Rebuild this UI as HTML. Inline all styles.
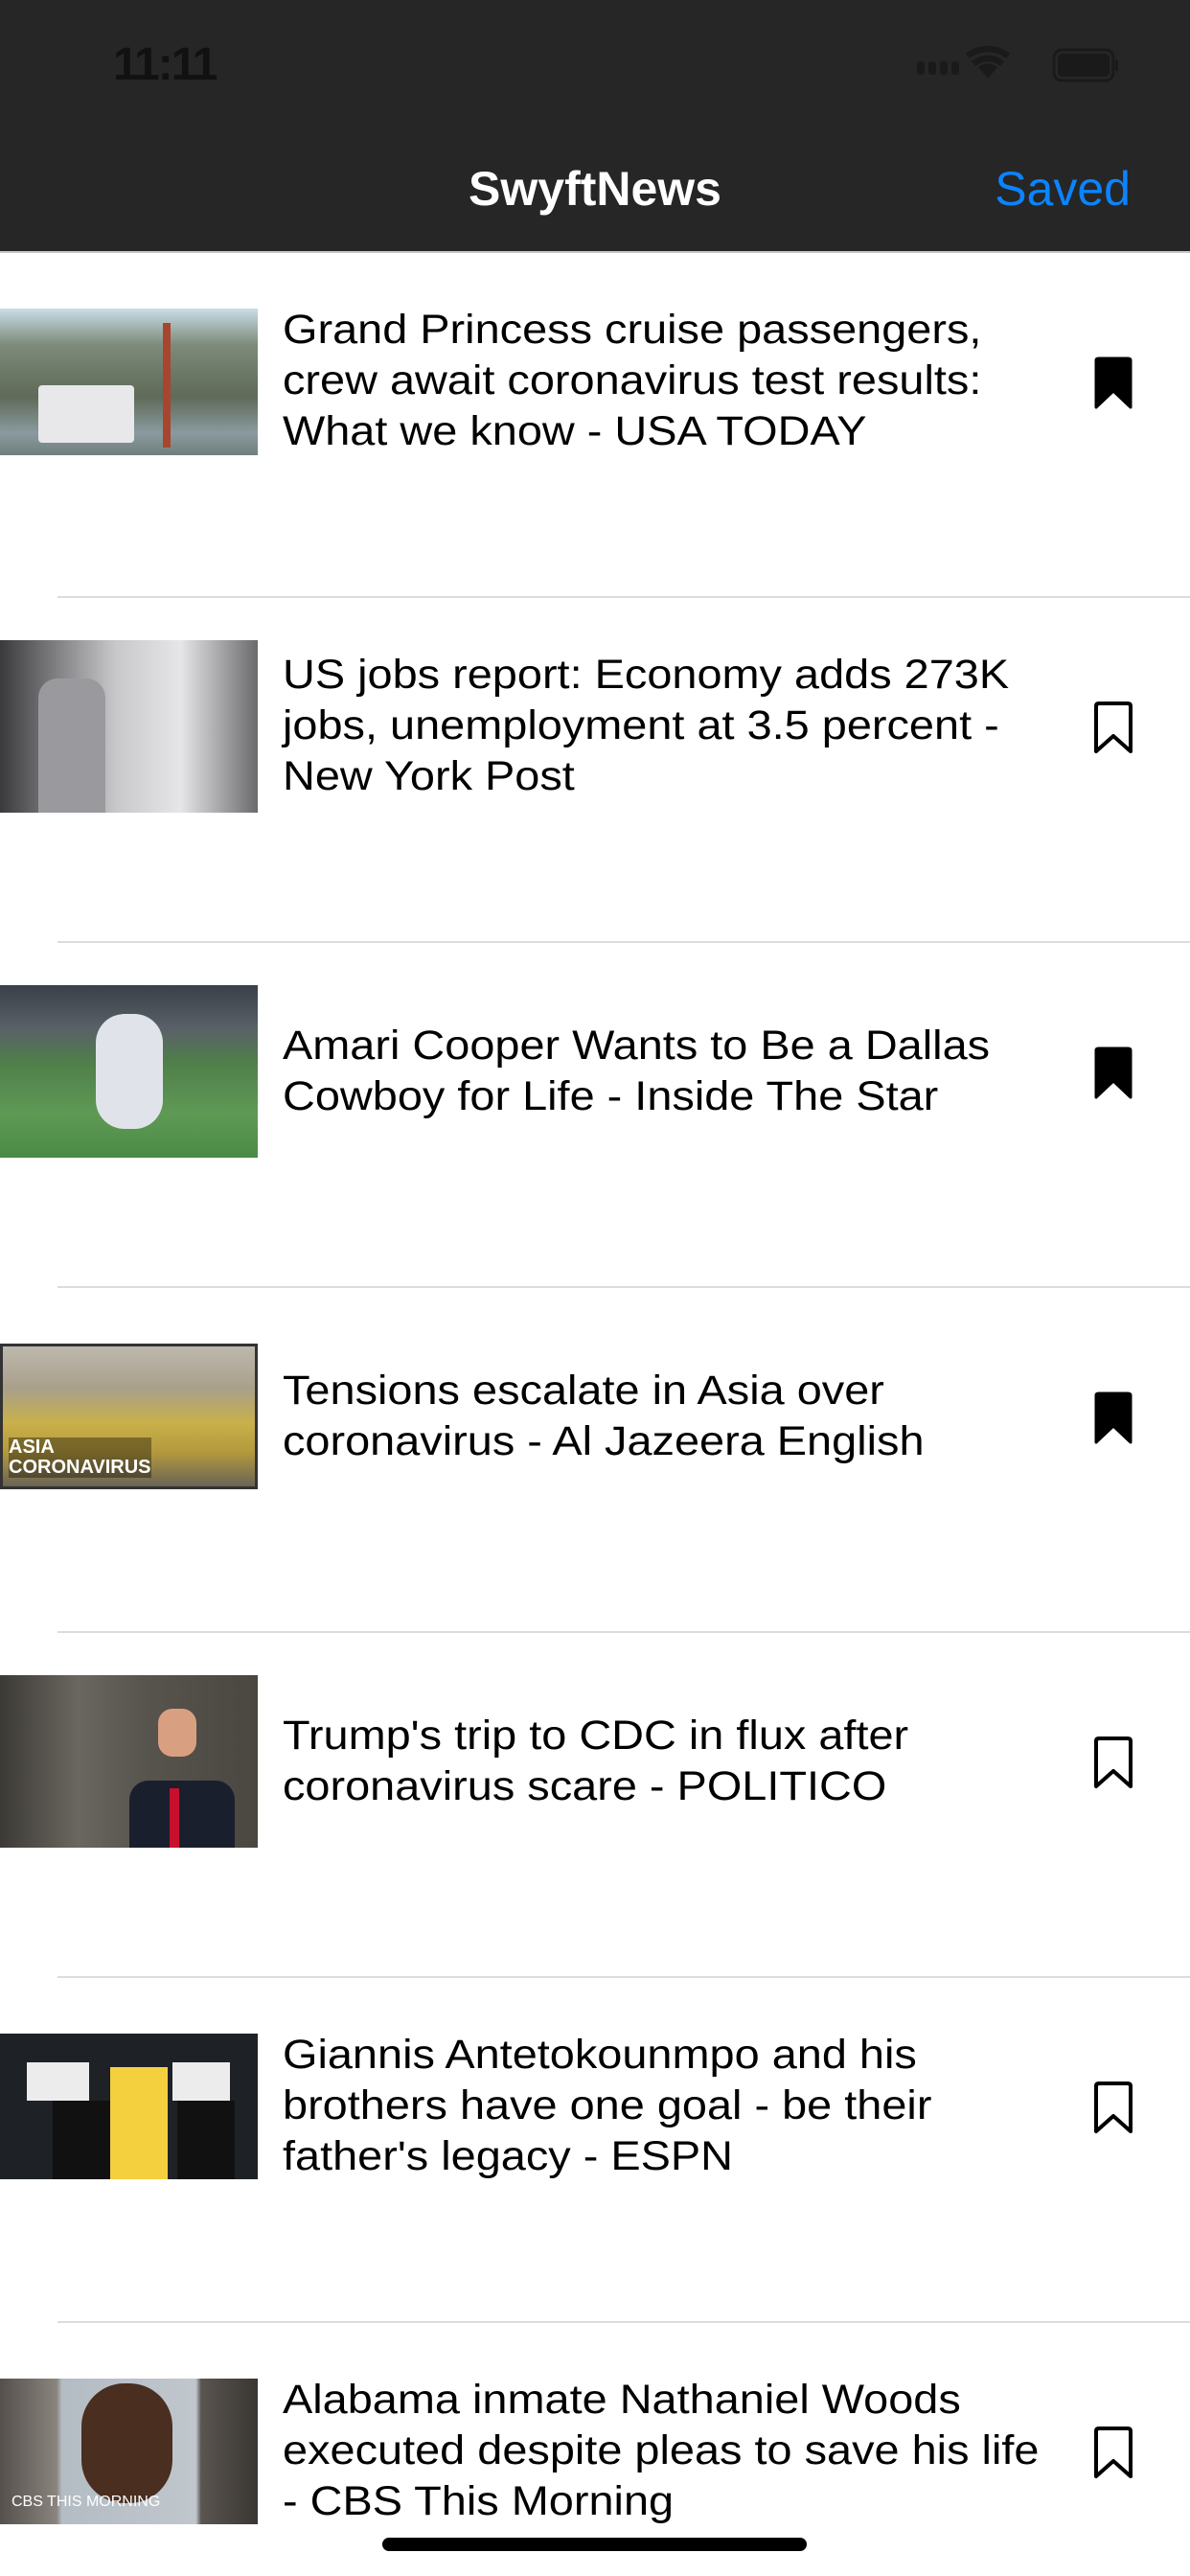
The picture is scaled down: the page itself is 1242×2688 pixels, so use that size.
<!DOCTYPE html>
<html><head><meta charset="utf-8"><style>
*{margin:0;padding:0;box-sizing:border-box}
body{width:1242px;height:2688px;background:#fff;position:relative;overflow:hidden;font-family:"Liberation Sans",sans-serif}
.hdr{position:absolute;left:0;top:0;width:1242px;height:264px;background:#262626;border-bottom:2px solid #c8c8c8}
.time{position:absolute;left:118px;top:40px;font-size:48px;font-weight:bold;color:#111;letter-spacing:-2px}
.title{position:absolute;left:0;width:1242px;top:168px;text-align:center;font-size:50px;font-weight:bold;color:#fff}
.saved{position:absolute;right:62px;top:168px;font-size:50px;color:#0a84ff}
.thumb{position:absolute;left:0;width:269px}
.txt{position:absolute;left:295px;font-size:43px;line-height:53px;color:#000;white-space:nowrap;transform:scaleX(1.09);transform-origin:0 0}
.sep{position:absolute;left:60px;right:0;height:2px;background:#dcdcdc}
.bm{position:absolute;left:1140px;width:44px;height:56px}
.home{position:absolute;left:399px;top:2648px;width:443px;height:14px;border-radius:7px;background:#000}
</style></head><body>
<div class="hdr">
<div class="time">11:11</div>
<svg style="position:absolute;left:955px;top:44px" width="230" height="50" viewBox="0 0 230 50">
<g fill="#1a1a1a"><rect x="2" y="20" width="8" height="14" rx="3"/><rect x="14" y="20" width="8" height="14" rx="3"/><rect x="26" y="20" width="8" height="14" rx="3"/><rect x="38" y="20" width="8" height="14" rx="3"/>
<path d="M76 38 L66 26 A16 16 0 0 1 86 26 Z"/>
<path d="M59 20 A26 26 0 0 1 93 20 L89 25 A20 20 0 0 0 63 25 Z"/>
<path d="M53 12 A36 36 0 0 1 99 12 L95 17 A30 30 0 0 0 57 17 Z"/>
<rect x="145" y="8" width="62" height="32" rx="8" fill="none" stroke="#1a1a1a" stroke-width="3"/>
<rect x="149" y="12" width="54" height="24" rx="5"/><rect x="209" y="18" width="3" height="12" rx="1"/></g></svg>
<div class="title">SwyftNews</div>
<div class="saved">Saved</div>
</div>

<!-- row 1 -->
<div class="thumb" style="top:322px;height:153px;background:linear-gradient(180deg,#c9dde6 0%,#7d8a7a 25%,#5f6a58 60%,#8a9aa0 85%,#6f7f7a 100%)"><div style="position:absolute;left:40px;top:80px;width:100px;height:60px;background:#e8e8ea;border-radius:4px"></div><div style="position:absolute;left:170px;top:15px;width:8px;height:130px;background:#a8452f"></div></div>
<div class="txt" style="top:318px">Grand Princess cruise passengers,<br>crew await coronavirus test results:<br>What we know - USA TODAY</div>
<svg class="bm" style="top:372px" viewBox="0 0 44 56"><path d="M4 4 Q4 2 7 2 H37 Q40 2 40 4 V53 L22 36 L4 53 Z" fill="#000" stroke="#000" stroke-width="3" stroke-linejoin="round"/></svg>
<div class="sep" style="top:622px"></div>

<!-- row 2 -->
<div class="thumb" style="top:668px;height:180px;background:linear-gradient(90deg,#3a3a3c 0%,#8a8a8c 25%,#c8c8ca 45%,#e6e6e8 70%,#6a6a6c 100%)"><div style="position:absolute;left:40px;top:40px;width:70px;height:140px;background:#9a9a9e;border-radius:20px 20px 0 0"></div></div>
<div class="txt" style="top:678px">US jobs report: Economy adds 273K<br>jobs, unemployment at 3.5 percent -<br>New York Post</div>
<svg class="bm" style="top:732px" viewBox="0 0 44 56"><path d="M4 5 Q4 2 7 2 H37 Q40 2 40 5 V52 L22 36 L4 52 Z" fill="none" stroke="#000" stroke-width="4" stroke-linejoin="round"/></svg>
<div class="sep" style="top:982px"></div>

<!-- row 3 -->
<div class="thumb" style="top:1028px;height:180px;background:linear-gradient(180deg,#3a4048 0%,#5a6068 25%,#4f7f4a 45%,#5f9a55 75%,#4a8a46 100%)"><div style="position:absolute;left:100px;top:30px;width:70px;height:120px;background:#e0e4ea;border-radius:30px"></div></div>
<div class="txt" style="top:1065px">Amari Cooper Wants to Be a Dallas<br>Cowboy for Life - Inside The Star</div>
<svg class="bm" style="top:1092px" viewBox="0 0 44 56"><path d="M4 4 Q4 2 7 2 H37 Q40 2 40 4 V53 L22 36 L4 53 Z" fill="#000" stroke="#000" stroke-width="3" stroke-linejoin="round"/></svg>
<div class="sep" style="top:1342px"></div>

<!-- row 4 -->
<div class="thumb" style="top:1402px;height:152px;border:3px solid #333;background:linear-gradient(180deg,#bdb8ae 0%,#a9a08a 30%,#c9b04a 55%,#b49a3c 75%,#6a6456 100%)"><div style="position:absolute;left:6px;top:95px;color:#fff;font-weight:bold;font-size:20px;line-height:21px;background:rgba(0,0,0,.35)">ASIA<br>CORONAVIRUS</div></div>
<div class="txt" style="top:1425px">Tensions escalate in Asia over<br>coronavirus - Al Jazeera English</div>
<svg class="bm" style="top:1452px" viewBox="0 0 44 56"><path d="M4 4 Q4 2 7 2 H37 Q40 2 40 4 V53 L22 36 L4 53 Z" fill="#000" stroke="#000" stroke-width="3" stroke-linejoin="round"/></svg>
<div class="sep" style="top:1702px"></div>

<!-- row 5 -->
<div class="thumb" style="top:1748px;height:180px;background:linear-gradient(90deg,#3c3a36 0%,#6a6660 30%,#58544e 55%,#4a4640 100%)"><div style="position:absolute;left:135px;top:110px;width:110px;height:70px;background:#1a1f2e;border-radius:20px 20px 0 0"></div><div style="position:absolute;left:165px;top:35px;width:40px;height:50px;background:#d8a080;border-radius:15px"></div><div style="position:absolute;left:177px;top:118px;width:10px;height:62px;background:#c8102e"></div></div>
<div class="txt" style="top:1785px">Trump's trip to CDC in flux after<br>coronavirus scare - POLITICO</div>
<svg class="bm" style="top:1812px" viewBox="0 0 44 56"><path d="M4 5 Q4 2 7 2 H37 Q40 2 40 5 V52 L22 36 L4 52 Z" fill="none" stroke="#000" stroke-width="4" stroke-linejoin="round"/></svg>
<div class="sep" style="top:2062px"></div>

<!-- row 6 -->
<div class="thumb" style="top:2122px;height:152px;background:#1e2226"><div style="position:absolute;left:28px;top:30px;width:65px;height:40px;background:#ececec"></div><div style="position:absolute;left:115px;top:35px;width:60px;height:117px;background:#f4d03f"></div><div style="position:absolute;left:180px;top:30px;width:60px;height:40px;background:#ececec"></div><div style="position:absolute;left:55px;top:70px;width:60px;height:82px;background:#111"></div><div style="position:absolute;left:185px;top:70px;width:60px;height:82px;background:#111"></div></div>
<div class="txt" style="top:2118px">Giannis Antetokounmpo and his<br>brothers have one goal - be their<br>father's legacy - ESPN</div>
<svg class="bm" style="top:2172px" viewBox="0 0 44 56"><path d="M4 5 Q4 2 7 2 H37 Q40 2 40 5 V52 L22 36 L4 52 Z" fill="none" stroke="#000" stroke-width="4" stroke-linejoin="round"/></svg>
<div class="sep" style="top:2422px"></div>

<!-- row 7 -->
<div class="thumb" style="top:2482px;height:152px;background:linear-gradient(90deg,#55504c 0%,#8a847e 22%,#b4bcc4 24%,#c0c6cc 76%,#5a5550 78%,#3a3632 100%)"><div style="position:absolute;left:85px;top:5px;width:95px;height:125px;background:#4a2e20;border-radius:45px"></div><div style="position:absolute;left:12px;top:120px;color:#fff;font-size:16px">CBS THIS MORNING</div></div>
<div class="txt" style="top:2478px">Alabama inmate Nathaniel Woods<br>executed despite pleas to save his life<br>- CBS This Morning</div>
<svg class="bm" style="top:2532px" viewBox="0 0 44 56"><path d="M4 5 Q4 2 7 2 H37 Q40 2 40 5 V52 L22 36 L4 52 Z" fill="none" stroke="#000" stroke-width="4" stroke-linejoin="round"/></svg>

<div class="home"></div>
</body></html>
